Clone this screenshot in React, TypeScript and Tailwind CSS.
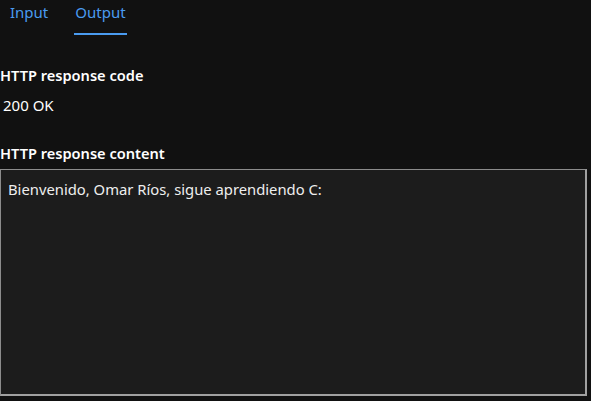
export default function App() {
  return (
    <div
      className="w-[591px] h-[401px] bg-[#111111] text-white overflow-hidden"
      style={{ fontFamily: "'Noto Sans', 'Open Sans', sans-serif" }}
    >
      {/* tabs */}
      <div className="flex gap-[26px] pl-[10px] h-[36px] items-start">
        <div className="pt-[2px] text-[15px] leading-[20px] text-[#4a9bf0]">Input</div>
        <div className="pt-[2px] text-[15px] leading-[20px] text-[#4a9bf0] border-b-2 border-[#4a9bf0] h-[35px] px-[1px]">
          Output
        </div>
      </div>

      <div className="pt-[29px] text-[14.6px] font-semibold leading-[20px]">HTTP response code</div>
      <div className="pt-[10px] pl-[3px] text-[15px] leading-[20px]">200 OK</div>

      <div className="pt-[28px] text-[14.6px] font-semibold leading-[20px]">HTTP response content</div>
      <div className="mt-[6px] w-[587px] h-[227px] bg-[#1c1c1c] border border-[#8c8c8c] border-b-2 border-r-2 border-b-[#a0a0a0] border-r-[#a0a0a0] px-[7px] pt-[9px] text-[14.8px] leading-[20px] text-[#eeeeee]">
        Bienvenido, Omar Ríos, sigue aprendiendo C:
      </div>
    </div>
  );
}
